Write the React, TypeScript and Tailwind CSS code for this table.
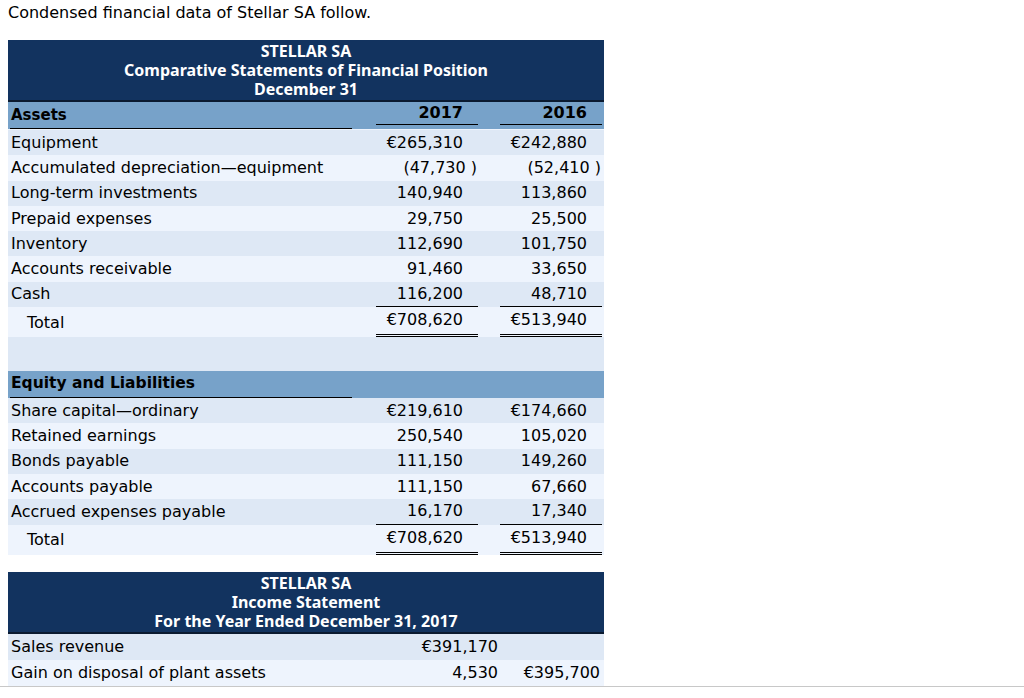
import React from 'react';

type Row = { label: string; a: string; b: string; shade: boolean; neg?: boolean };

const assets: Row[] = [
    { label: 'Equipment', a: '€265,310', b: '€242,880', shade: true },
    { label: 'Accumulated depreciation—equipment', a: '(47,730 )', b: '(52,410 )', shade: false, neg: true },
    { label: 'Long-term investments', a: '140,940', b: '113,860', shade: true },
    { label: 'Prepaid expenses', a: '29,750', b: '25,500', shade: false },
    { label: 'Inventory', a: '112,690', b: '101,750', shade: true },
    { label: 'Accounts receivable', a: '91,460', b: '33,650', shade: false },
];

const equity: Row[] = [
    { label: 'Share capital—ordinary', a: '€219,610', b: '€174,660', shade: true },
    { label: 'Retained earnings', a: '250,540', b: '105,020', shade: false },
    { label: 'Bonds payable', a: '111,150', b: '149,260', shade: true },
    { label: 'Accounts payable', a: '111,150', b: '67,660', shade: false },
];

const DataRow = ({ row }: { row: Row }) => (
    <div className={`flex h-[25.3px] items-center ${row.shade ? 'bg-[#dee8f5]' : 'bg-[#eef4fd]'}`}>
        <div className="w-[368px] pl-[3px]">{row.label}</div>
        <div className={`w-[102px] text-right ${row.neg ? 'pr-[1px]' : 'pr-[15px]'}`}>{row.a}</div>
        <div className="w-[22px]" />
        <div className={`w-[102px] text-right ${row.neg ? 'pr-[1px]' : 'pr-[15px]'}`}>{row.b}</div>
        <div className="w-[2px]" />
    </div>
);

// last line before the total: values get a single rule underneath
const LastRow = ({ row }: { row: Row }) => (
    <div className={`flex h-[25.3px] ${row.shade ? 'bg-[#dee8f5]' : 'bg-[#eef4fd]'}`}>
        <div className="w-[368px] pl-[3px] flex items-center">{row.label}</div>
        <div className="w-[102px] text-right pr-[15px] flex items-center justify-end border-b border-black">{row.a}</div>
        <div className="w-[22px]" />
        <div className="w-[102px] text-right pr-[15px] flex items-center justify-end border-b border-black">{row.b}</div>
        <div className="w-[2px]" />
    </div>
);

const TotalRow = ({ a, b }: { a: string; b: string }) => (
    <div className="flex h-[30px] bg-[#eef4fd]">
        <div className="w-[368px] pl-[19px] flex items-center pt-[1px]">Total</div>
        <div className="w-[102px] pr-[15px] flex items-center justify-end border-b-[3px] border-double border-black pb-[1px]">{a}</div>
        <div className="w-[22px]" />
        <div className="w-[102px] pr-[15px] flex items-center justify-end border-b-[3px] border-double border-black pb-[1px]">{b}</div>
        <div className="w-[2px]" />
    </div>
);

const Banner = ({ lines }: { lines: string[] }) => (
    <div className="bg-[#12335f] text-white font-bold text-[16px] font-['Noto_Sans',sans-serif] text-center leading-[19px] pt-[2px] pb-[1px] border-b-2 border-[#0a1a30]">
        {lines.map(l => (
            <div key={l}>{l}</div>
        ))}
    </div>
);

export default function App() {
    return (
        <div className="min-h-[698px] bg-white text-black text-[16px] font-['DejaVu_Sans',Verdana,sans-serif]">
            <div className="px-[8px] pt-[3px] leading-[19px]">Condensed financial data of Stellar SA follow.</div>

            <div className="mt-[18px] ml-[8px] w-[596px]">
                <Banner lines={['STELLAR SA', 'Comparative Statements of Financial Position', 'December 31']} />

                <div className="flex h-[27px] bg-[#77a2c9] font-bold text-[15px]">
                    <div className="w-[368px] pl-[2px] pr-[24px] flex">
                        <div className="flex-1 border-b border-black pl-px flex items-center">Assets</div>
                    </div>
                    <div className="w-[102px] pr-[15px] flex items-center justify-end border-b border-black mb-[4px] text-[16px]">2017</div>
                    <div className="w-[22px]" />
                    <div className="w-[102px] pr-[15px] flex items-center justify-end border-b border-black mb-[4px] text-[16px]">2016</div>
                    <div className="w-[2px]" />
                </div>
                <div className="h-[1px] bg-[#eef4fd]" />

                {assets.map(r => (
                    <DataRow key={r.label} row={r} />
                ))}
                <LastRow row={{ label: 'Cash', a: '116,200', b: '48,710', shade: true }} />
                <TotalRow a="€708,620" b="€513,940" />
                <div className="h-[34px] bg-[#dee8f5]" />

                <div className="flex h-[27px] bg-[#77a2c9] font-bold text-[15.5px]">
                    <div className="w-[368px] pl-[2px] pr-[24px] flex">
                        <div className="flex-1 border-b border-black pl-px flex items-center">Equity and Liabilities</div>
                    </div>
                    <div className="flex-1" />
                </div>

                {equity.map(r => (
                    <DataRow key={r.label} row={r} />
                ))}
                <LastRow row={{ label: 'Accrued expenses payable', a: '16,170', b: '17,340', shade: true }} />
                <TotalRow a="€708,620" b="€513,940" />
            </div>

            <div className="mt-[17px] ml-[8px] w-[596px]">
                <Banner lines={['STELLAR SA', 'Income Statement', 'For the Year Ended December 31, 2017']} />
                <div className="flex h-[26px] items-center bg-[#dee8f5]">
                    <div className="w-[392px] pl-[3px]">Sales revenue</div>
                    <div className="w-[98px] text-right">€391,170</div>
                    <div className="flex-1" />
                </div>
                <div className="flex h-[26px] items-center bg-[#eef4fd]">
                    <div className="w-[392px] pl-[3px]">Gain on disposal of plant assets</div>
                    <div className="w-[98px] text-right">4,530</div>
                    <div className="flex-1 text-right pr-[4px]">€395,700</div>
                </div>
            </div>
            <div className="border-t border-[#c8c8c8]" />
        </div>
    );
}
